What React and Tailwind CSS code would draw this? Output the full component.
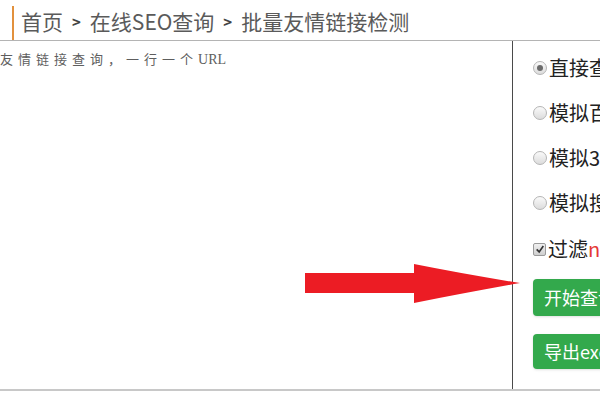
const OPTIONS = [
  { label: '直接查询', checked: true },
  { label: '模拟百度蜘蛛', checked: false },
  { label: '模拟360蜘蛛', checked: false },
  { label: '模拟搜狗蜘蛛', checked: false },
]

const cjk = { fontFamily: '"Noto Sans CJK SC", "Liberation Sans", sans-serif' }

function Radio({ checked }) {
  return (
    <span className="w-[14px] h-[14px] rounded-full border border-[#b5b5b5] bg-gradient-to-b from-[#fafafa] to-[#dcdcdc] flex items-center justify-center shrink-0">
      {checked && <span className="w-[6px] h-[6px] rounded-full bg-[#6b6b6b]" />}
    </span>
  )
}

function Arrow() {
  return (
    <svg
      className="absolute left-[304px] top-[262px]"
      width="220"
      height="44"
      viewBox="0 0 220 44"
    >
      <path
        d="M1 11 H110 V2 Q160 12 216 21 Q160 31 110 41 V31 H1 Z"
        fill="#ec1c24"
      />
    </svg>
  )
}

export default function App() {
  return (
    <div className="relative w-[600px] h-[400px] bg-white overflow-hidden" style={cjk}>
      <header className="h-[41px] flex items-end border-b border-[#b4b4b4]">
        <div className="ml-3 w-[2px] h-[34px] bg-[#e2913d]" />
        <div className="ml-[7px] mb-[5px] flex items-center text-[21px] leading-[27px] text-[#5a5a5a] whitespace-nowrap">
          <span>首页</span>
          <span className="mx-[9px] text-[15px] font-bold text-[#444]">&gt;</span>
          <span>在线SEO查询</span>
          <span className="mx-[9px] text-[15px] font-bold text-[#444]">&gt;</span>
          <span>批量友情链接检测</span>
        </div>
      </header>

      <div className="flex h-[350px] border-b-2 border-[#c8c8c8]">
        <div className="w-[512px] pt-[9px] text-[13px] leading-[18px] tracking-[5px] text-[#5e5e5e] whitespace-nowrap">
          友情链接查询，一行一个<span className="tracking-normal text-[14px]" style={{ fontFamily: '"Liberation Serif", serif' }}>URL</span>
        </div>
        <div className="flex-1 border-l border-[#4a4a4a] pl-[20px] pt-[4px] overflow-hidden whitespace-nowrap">
          {OPTIONS.map(({ label, checked }) => (
            <div key={label} className="h-[45px] flex items-center gap-[2px] text-[20px] text-[#222]">
              <Radio checked={checked} />
              <span>{label}</span>
            </div>
          ))}
          <div className="h-[48px] flex items-center gap-[2px] text-[20px] text-[#222]">
            <span className="w-[13px] h-[13px] rounded-[2px] border border-[#9a9a9a] bg-gradient-to-b from-[#f0f0f0] to-[#cfcfcf] flex items-center justify-center shrink-0">
              <svg viewBox="0 0 12 12" className="w-[10px] h-[10px]">
                <path d="M2 6.5 L5 9.5 L10 2.5" fill="none" stroke="#333" strokeWidth="2" />
              </svg>
            </span>
            <span>过滤<span className="text-[#e53935]">nofollow</span></span>
          </div>
          <button className="mt-[6px] h-[37px] px-[11px] rounded-[4px] bg-[#33a94c] text-white text-[18px] shadow-sm">
            开始查询
          </button>
          <div>
            <button className="mt-[18px] h-[35px] px-[11px] rounded-[4px] bg-[#33a94c] text-white text-[18px] shadow-sm">
              导出excel
            </button>
          </div>
        </div>
      </div>

      <Arrow />
    </div>
  )
}
